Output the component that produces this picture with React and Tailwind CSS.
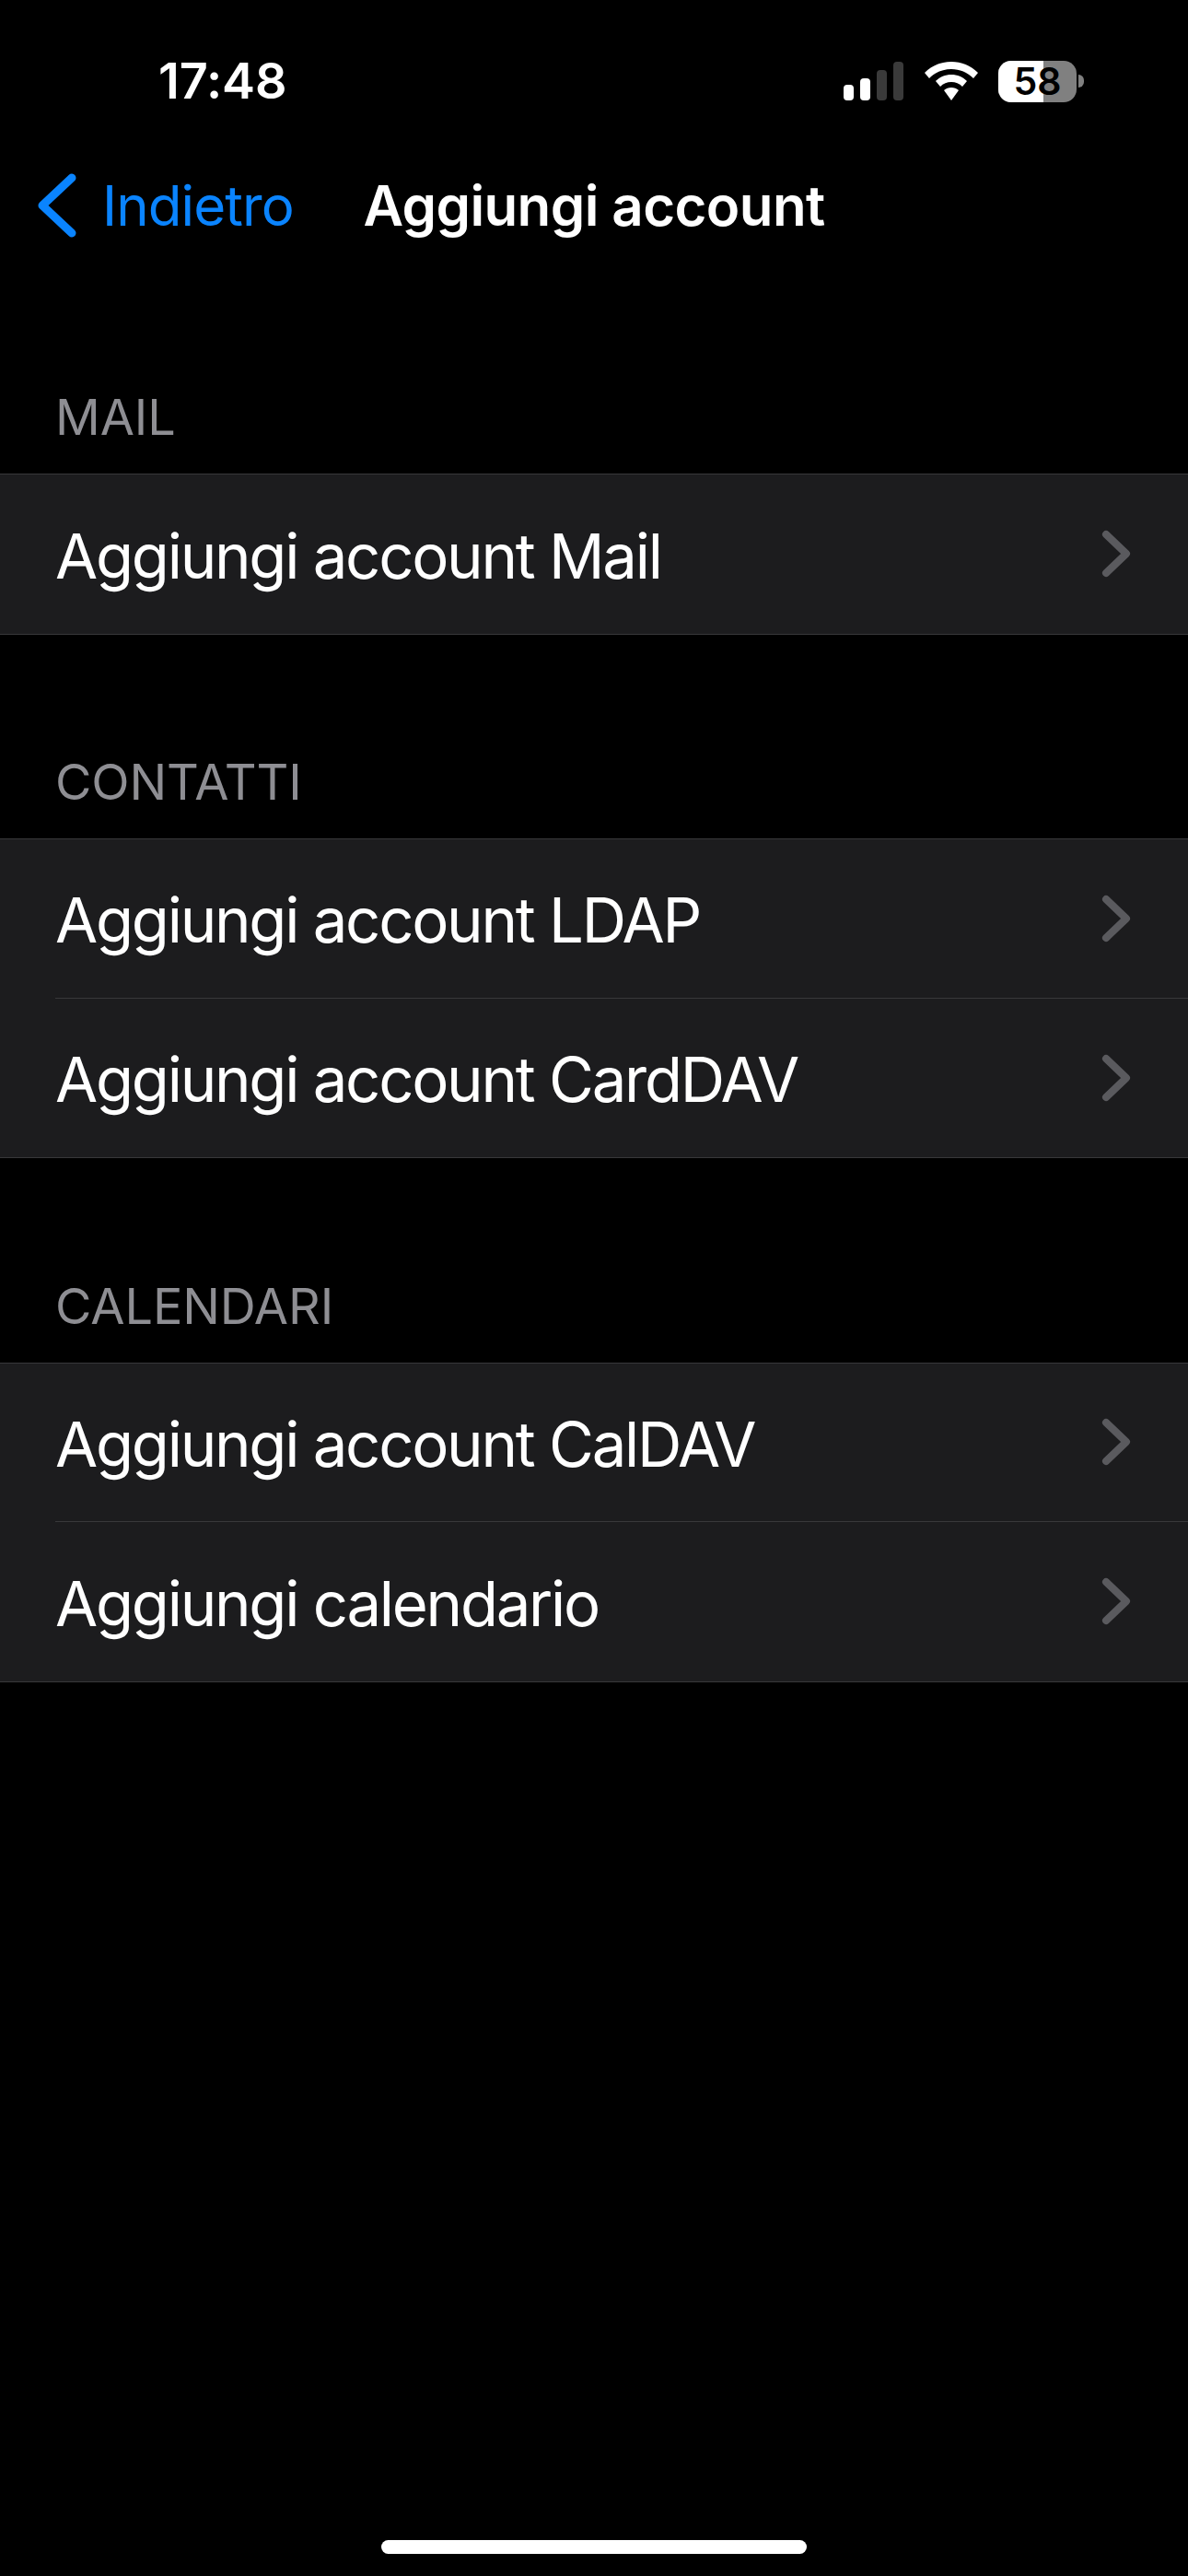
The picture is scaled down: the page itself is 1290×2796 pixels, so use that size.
const font = { fontFamily: 'Inter, "Liberation Sans", sans-serif' };

function Chevron() {
  return (
    <svg width="36" height="56" viewBox="0 0 36 56" fill="none" className="shrink-0">
      <path d="M7 7 L29 28 L7 49" stroke="#5a5a5e" strokeWidth="8" strokeLinecap="round" strokeLinejoin="round" />
    </svg>
  );
}

function Row({ label, last }) {
  return (
    <div className="h-[172.5px] pl-[60px] bg-[#1c1c1e]">
      <div className={`h-full flex items-center pr-[60px] justify-between ${last ? "" : "border-b border-[#38383a]"}`}>
        <span className="text-[67px] leading-none text-white tracking-[-2.25px] pt-[4px]">{label}</span>
        <Chevron />
      </div>
    </div>
  );
}

function Section({ title, rows }) {
  return (
    <section>
      <div className="h-[221.5px] flex items-end pl-[60px] pb-[34px]">
        <span className="text-[54px] leading-none text-[#8e8e93] tracking-[-0.1px]">{title}</span>
      </div>
      <div className="border-y border-[#38383a]">
        {rows.map((r, i) => (
          <Row key={r} label={r} last={i === rows.length - 1} />
        ))}
      </div>
    </section>
  );
}

function StatusIcons() {
  return (
    <div className="flex items-center">
      <svg width="66" height="42" viewBox="0 0 66 42" className="mr-[22px]">
        <rect x="0" y="25" width="11" height="17" rx="4" fill="#fff" />
        <rect x="18" y="18" width="11" height="24" rx="4" fill="#fff" />
        <rect x="36" y="9" width="11" height="33" rx="4" fill="#3a3a3a" />
        <rect x="54" y="0" width="11" height="42" rx="4" fill="#3a3a3a" />
      </svg>
      <svg width="58" height="42" viewBox="0 0 58 42" className="mr-[22px]">
        <path d="M29 0C40 0 50 4 58 12L53 18C46.500 11.500 38 8 29 8C20 8 11.500 11.500 5 18L0 12C8 4 18 0 29 0Z" fill="#fff" />
        <path d="M29 14C35.500 14 41.500 16.500 46 21L41 27C37.800 23.800 33.500 22 29 22C24.500 22 20.200 23.800 17 27L12 21C16.500 16.500 22.500 14 29 14Z" fill="#fff" />
        <path d="M29 28C32 28 34.800 29.200 37 31L29 42L21 31C23.200 29.200 26 28 29 28Z" fill="#fff" />
      </svg>
      <div className="flex items-center">
        <div className="relative w-[85px] h-[45px] rounded-[14px] flex bg-[#808080]">
          <div className="w-[49px] bg-white rounded-l-[14px]" />
          <span className="absolute inset-0 flex items-center justify-center text-[41px] leading-none font-semibold text-black">58</span>
        </div>
        <div className="ml-[2px] w-[6px] h-[14px] rounded-r-[6px] bg-[#808080]" />
      </div>
    </div>
  );
}

export default function App() {
  return (
    <div style={font} className="w-[1290px] h-[2796px] bg-black flex flex-col overflow-hidden">
      <div className="h-[176px] flex items-center justify-between pl-[172px] pr-[113px]">
        <span className="text-[54px] leading-none font-semibold text-white tracking-[-0.1px]">17:48</span>
        <StatusIcons />
      </div>
      <div className="h-[94px] mb-[22.5px] grid grid-cols-[1fr_auto_1fr] items-center">
        <div className="flex items-center pl-[40px] gap-[27px]">
          <svg width="44" height="70" viewBox="0 0 44 70" fill="none" className="shrink-0">
            <path d="M38 5 L6 35 L38 65" stroke="#0a84ff" strokeWidth="9" strokeLinecap="round" strokeLinejoin="round" />
          </svg>
          <span className="text-[60px] leading-none text-[#0a84ff] tracking-[-0.9px]">Indietro</span>
        </div>
        <span className="text-[60px] leading-none font-semibold text-white tracking-[-0.6px]">Aggiungi account</span>
        <div />
      </div>
      <Section title="MAIL" rows={["Aggiungi account Mail"]} />
      <Section title="CONTATTI" rows={["Aggiungi account LDAP", "Aggiungi account CardDAV"]} />
      <Section title="CALENDARI" rows={["Aggiungi account CalDAV", "Aggiungi calendario"]} />
      <div className="mt-auto mb-[24px] self-center w-[462px] h-[15px] rounded-[8px] bg-white" />
    </div>
  );
}
